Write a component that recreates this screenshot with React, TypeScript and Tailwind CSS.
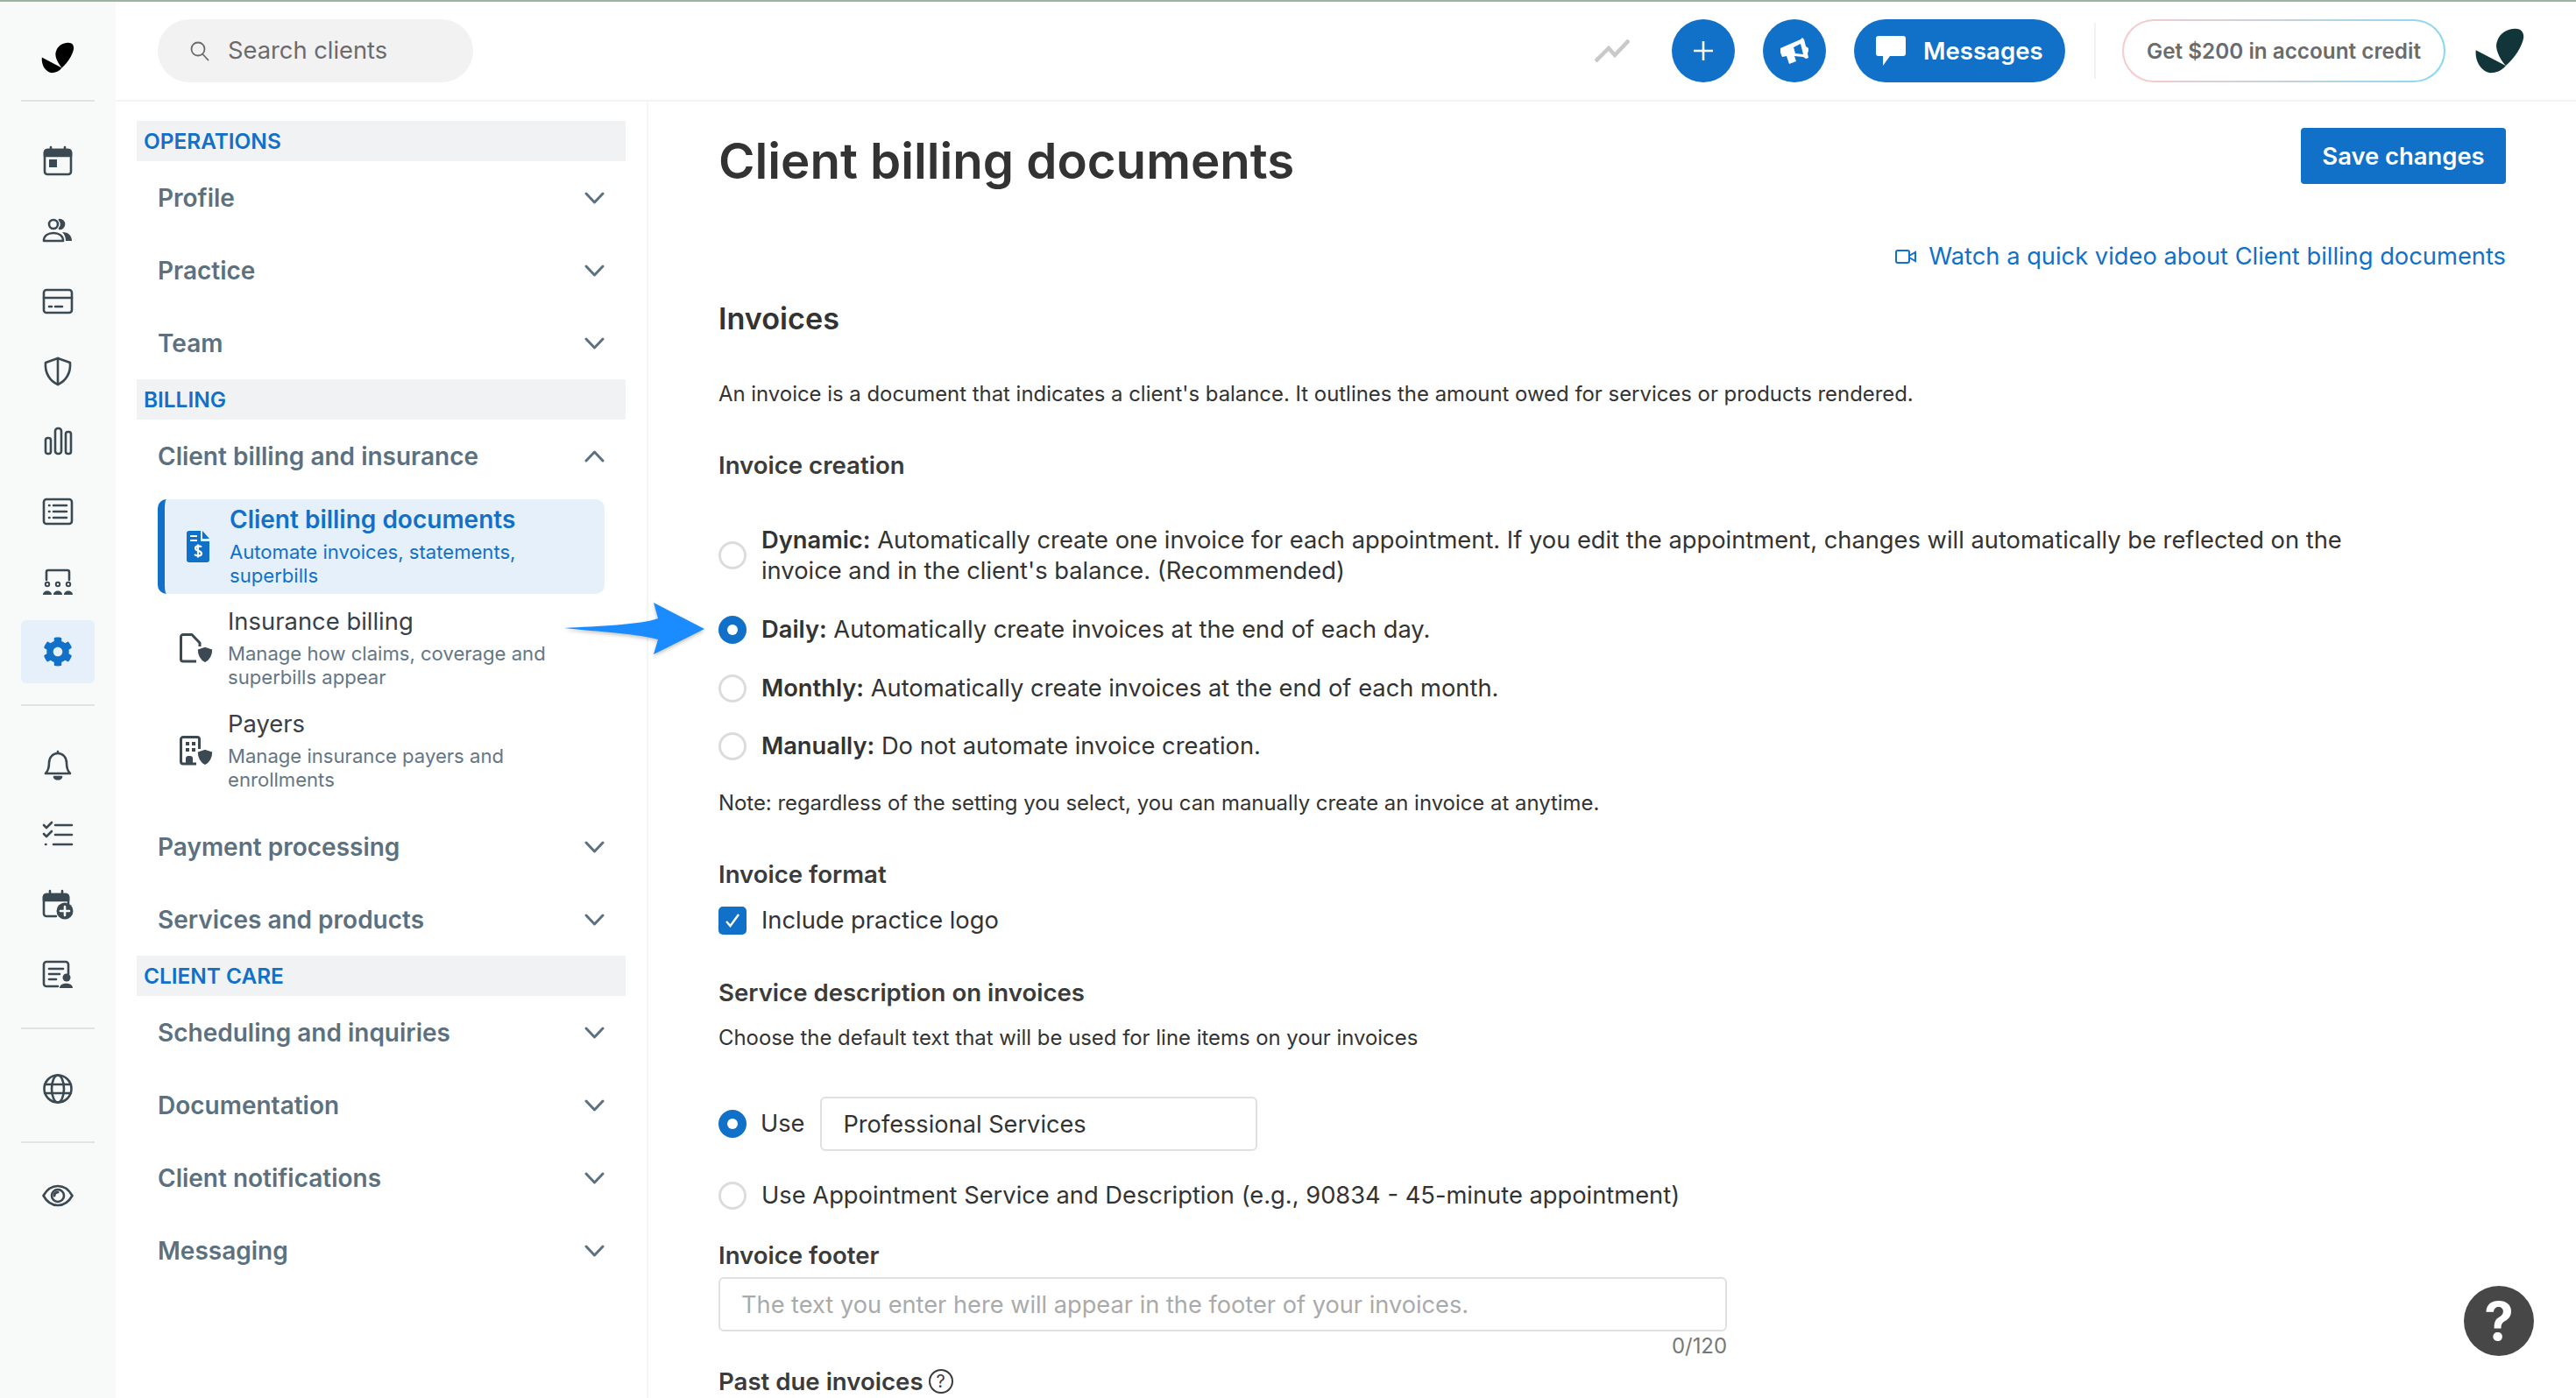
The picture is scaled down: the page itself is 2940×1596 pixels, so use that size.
import { FaCog } from "react-icons/fa";
import { ReactNode } from "react";

const Logo = ({ className }: { className: string }) => (
  <svg viewBox="14 15 44 41" preserveAspectRatio="none" className={className} fill="currentColor">
    <path d="M41 48C36 42 31 33 34 27C36 21 42 17 49 17C54 17 56 20 56 24C55 32 48 42 41 48Z" />
    <path d="M16 35L41 48C38 52 33 54 28 54C21 53 15 45 16 35Z" />
  </svg>
);

const RailSvg = ({ children }: { children: ReactNode }) => (
  <svg
    viewBox="0 0 36 36"
    className="w-[36px] h-[36px] text-[#3b4952]"
    fill="none"
    stroke="currentColor"
    strokeWidth="2.6"
    strokeLinecap="round"
    strokeLinejoin="round"
  >
    {children}
  </svg>
);

const CalendarIcon = () => (
  <RailSvg>
    <rect x="3" y="5" width="30" height="28" rx="3" />
    <path d="M3 8a3 3 0 0 1 3-3h24a3 3 0 0 1 3 3v4H3z" fill="currentColor" />
    <path d="M10 2v4M26 2v4" />
    <rect x="8" y="16" width="9" height="9" fill="currentColor" stroke="none" />
  </RailSvg>
);

const UsersIcon = () => (
  <RailSvg>
    <circle cx="13" cy="10" r="5" />
    <path d="M2 29c0-6 5-9 11-9s11 3 11 9z" />
    <path d="M20 5a5 5 0 0 1 0 10 7 7 0 0 0 0-10z" fill="currentColor" />
    <path d="M23 19c7 0 11 4 11 10h-7c0-4-1-7-4-10z" fill="currentColor" stroke="none" />
  </RailSvg>
);

const CardIcon = () => (
  <RailSvg>
    <rect x="2" y="5" width="32" height="26" rx="3" />
    <path d="M2 14h32" />
    <path d="M8 24h3M15 24h8" />
  </RailSvg>
);

const ShieldIcon = () => (
  <RailSvg>
    <path d="M18 3l14 5c1 12-5 21-14 25C9 29 3 20 4 8z" />
    <path d="M18 3v30" />
  </RailSvg>
);

const BarsIcon = () => (
  <RailSvg>
    <rect x="4" y="14" width="6" height="18" rx="2.5" />
    <rect x="15" y="3" width="7" height="29" rx="3" />
    <rect x="27" y="7" width="6" height="25" rx="2.5" />
  </RailSvg>
);

const ListCardIcon = () => (
  <RailSvg>
    <rect x="2" y="4" width="32" height="28" rx="3" />
    <path d="M8 11h.5M8 18h.5M8 25h.5M13 11h15M13 18h15M13 25h15" />
  </RailSvg>
);

const TeamIcon = () => (
  <RailSvg>
    <path d="M5 16V7a2 2 0 0 1 2-2h22a2 2 0 0 1 2 2v9" />
    <circle cx="6" cy="21" r="2.2" strokeWidth="2" />
    <circle cx="18" cy="21" r="2.2" strokeWidth="2" />
    <circle cx="30" cy="21" r="2.2" strokeWidth="2" />
    <path d="M1 33c0-6 10-6 10 0zM13 33c0-6 10-6 10 0zM25 33c0-6 10-6 10 0z" fill="currentColor" stroke="none" />
  </RailSvg>
);

const BellIcon = () => (
  <RailSvg>
    <path d="M18 3v2M4 28h28c-3-3-4-6-4-12 0-6-4-11-10-11S8 10 8 16c0 6-1 9-4 12z" />
    <path d="M14 32h8c-1 3-7 3-8 0z" fill="currentColor" />
  </RailSvg>
);

const ChecklistIcon = () => (
  <RailSvg>
    <path d="M2 7l3 3 6-6M2 17l3 3 6-6M4 29h.5M15 7h19M15 18h19M13 29h21" />
  </RailSvg>
);

const CalendarPlusIcon = () => (
  <RailSvg>
    <path d="M16 31H5a3 3 0 0 1-3-3V9a3 3 0 0 1 3-3h22a3 3 0 0 1 3 3v8" />
    <path d="M2 9a3 3 0 0 1 3-3h22a3 3 0 0 1 3 3v4H2z" fill="currentColor" />
    <path d="M9 2v4M23 2v4" />
    <circle cx="26" cy="25" r="9.5" fill="currentColor" stroke="none" />
    <path d="M26 20v10M21 25h10" stroke="#f8f9f9" />
  </RailSvg>
);

const DocPersonIcon = () => (
  <RailSvg>
    <path d="M18 31H5a3 3 0 0 1-3-3V6a3 3 0 0 1 3-3h22a3 3 0 0 1 3 3v11" />
    <path d="M8 11h16M8 17h12M8 23h8" />
    <circle cx="28" cy="21" r="4.5" fill="currentColor" stroke="none" />
    <path d="M20 33c0-7 15-7 15 0z" fill="currentColor" stroke="none" />
  </RailSvg>
);

const GlobeIcon = () => (
  <RailSvg>
    <circle cx="18" cy="18" r="15.5" />
    <ellipse cx="18" cy="18" rx="7" ry="15.5" />
    <path d="M3 13h30M3 23h30" />
  </RailSvg>
);

const EyeIcon = () => (
  <RailSvg>
    <path d="M1.5 18C6 10 12 7 18 7s12 3 16.500 11C30 26 24 29 18 29S6 26 1.500 18z" />
    <circle cx="18" cy="18" r="7" />
    <path d="M18 14a4 4 0 0 0-4 4" strokeWidth="3" />
  </RailSvg>
);

const RailItem = ({ children }: { children: ReactNode }) => (
  <div className="h-[80px] flex items-center justify-center shrink-0">{children}</div>
);

const RailDivider = ({ className }: { className: string }) => (
  <div className={`h-[2px] w-[84px] bg-[#e2e2e2] mx-auto shrink-0 ${className}`} />
);

const Rail = () => (
  <aside className="w-[132px] shrink-0 bg-[#f8f9f9] flex flex-col">
    <div className="h-[112px] flex justify-center pt-[45px] shrink-0 text-black">
      <Logo className="w-[40px] h-[38px]" />
    </div>
    <RailDivider className="" />
    <div className="h-[28px] shrink-0" />
    <RailItem><CalendarIcon /></RailItem>
    <RailItem><UsersIcon /></RailItem>
    <RailItem><CardIcon /></RailItem>
    <RailItem><ShieldIcon /></RailItem>
    <RailItem><BarsIcon /></RailItem>
    <RailItem><ListCardIcon /></RailItem>
    <RailItem><TeamIcon /></RailItem>
    <div className="mt-[4px] h-[72px] w-[84px] mx-auto rounded-[6px] bg-[#e5f0fa] flex items-center justify-center shrink-0 text-[#1170c8]">
      <FaCog className="w-[34px] h-[34px]" />
    </div>
    <RailDivider className="mt-[24px]" />
    <div className="h-[27px] shrink-0" />
    <RailItem><BellIcon /></RailItem>
    <RailItem><ChecklistIcon /></RailItem>
    <RailItem><CalendarPlusIcon /></RailItem>
    <RailItem><DocPersonIcon /></RailItem>
    <RailDivider className="mt-[20px]" />
    <div className="h-[28px] shrink-0" />
    <RailItem><GlobeIcon /></RailItem>
    <RailDivider className="mt-[20px]" />
    <div className="h-[20px] shrink-0" />
    <RailItem><EyeIcon /></RailItem>
  </aside>
);

const Header = () => (
  <header className="h-[114px] shrink-0 border-b-2 border-[#f2f3f3] flex items-center pl-[48px] pr-[57px]">
    <div className="w-[360px] h-[72px] rounded-full bg-[#f2f2f3] flex items-center pl-[36px] text-[#6b6b6b]">
      <svg viewBox="0 0 24 24" className="w-[24px] h-[24px]" fill="none" stroke="currentColor" strokeWidth="1.8" strokeLinecap="round">
        <circle cx="10" cy="10" r="7.500" />
        <path d="M15.500 16l6 6.500" />
      </svg>
      <span className="ml-[20px] text-[27.300px] leading-[36px]">Search clients</span>
    </div>
    <svg viewBox="0 0 40 26" className="ml-auto w-[40px] h-[26px]" fill="none" stroke="#c9c9c9" strokeWidth="4.500">
      <path d="M1 25L16 10l7 8L39 1" />
    </svg>
    <div className="ml-[48px] w-[72px] h-[72px] rounded-full bg-[#1170c8] flex items-center justify-center">
      <svg viewBox="0 0 22 22" className="w-[22px] h-[22px]" stroke="white" strokeWidth="2.600">
        <path d="M11 0v22M0 11h22" />
      </svg>
    </div>
    <div className="ml-[32px] w-[72px] h-[72px] rounded-full bg-[#1170c8] flex items-center justify-center">
      <svg viewBox="0 0 72 72" className="w-[72px] h-[72px]" fill="white" fillRule="evenodd">
        <path d="M20 33L43 23L45 21L47 23L49 31L52 33L52 36L51 39L52 44L49 45L46 43L36 42L38 48L30 51L27 42L22 43L20 38ZM35 32L43 28L46 40L37 39Z" />
      </svg>
    </div>
    <div className="ml-[32px] w-[241px] h-[72px] rounded-full bg-[#1170c8] flex items-center pl-[25px] text-white">
      <svg viewBox="0 0 34 34" className="w-[34px] h-[34px]" fill="white">
        <path d="M3 0H31a3 3 0 0 1 3 3V20a3 3 0 0 1-3 3H16L8 34V23H3a3 3 0 0 1-3-3V3a3 3 0 0 1 3-3z" />
      </svg>
      <span className="ml-[20px] text-[27.600px] leading-[36px] font-semibold">Messages</span>
    </div>
    <div className="ml-[33px] w-[2px] h-[64px] bg-[#f2f2f2]" />
    <div className="ml-[30px] w-[369px] h-[72px] rounded-full bg-gradient-to-r from-[#f9c9cb] to-[#84d8ef] p-[2px]">
      <div className="w-full h-full rounded-full bg-white flex items-center justify-center text-[24.300px] font-semibold text-[#6b6b6b]">
        Get $200 in account credit
      </div>
    </div>
    <Logo className="ml-[32px] w-[60px] h-[56px] text-[#12353a]" />
  </header>
);

const Chevron = ({ up }: { up?: boolean }) => (
  <svg viewBox="0 0 23 14" className="w-[23px] h-[14px]" fill="none" stroke="#5c7180" strokeWidth="3" strokeLinecap="round" strokeLinejoin="round">
    <path d={up ? "M2 12L11.500 2L21 12" : "M2 2L11.500 12L21 2"} />
  </svg>
);

const SectionLabel = ({ label }: { label: string }) => (
  <div className="h-[46px] bg-[#f1f2f4] pl-[8px] flex items-center text-[24.400px] font-semibold text-[#1170c8]">
    {label}
  </div>
);

const NavRow = ({ label, up }: { label: string; up?: boolean }) => (
  <div className="h-[83px] px-[24px] flex items-center justify-between text-[#5c7180] text-[28px] font-semibold">
    <span>{label}</span>
    <Chevron up={up} />
  </div>
);

const SubItem = ({
  icon,
  title,
  desc,
  active,
  className,
}: {
  icon: ReactNode;
  title: string;
  desc: ReactNode;
  active?: boolean;
  className?: string;
}) => (
  <div
    className={`mx-[24px] h-[108px] rounded-[10px] flex items-center ${
      active ? "bg-[#e5f0fa] border-l-[8px] border-[#1170c8] pl-[22px]" : "pl-[28px]"
    } ${className ?? ""}`}
  >
    <div className="w-[32px] flex justify-center shrink-0">{icon}</div>
    <div className="ml-[20px] pb-[3px]">
      <div
        className={`h-[38px] leading-[38px] ${
          active ? "text-[28px] font-semibold text-[#1170c8]" : "text-[27.400px] text-[#3a4046]"
        }`}
      >
        {title}
      </div>
      <div
        className={`mt-[5px] text-[22.100px] leading-[27px] whitespace-nowrap ${
          active ? "text-[#1170c8]" : "text-[#647684]"
        }`}
      >
        {desc}
      </div>
    </div>
  </div>
);

const DocDollarIcon = () => (
  <svg viewBox="0 0 26 36" className="w-[26px] h-[36px]">
    <path d="M3 0H16V12H26V33a3 3 0 0 1-3 3H3a3 3 0 0 1-3-3V3a3 3 0 0 1 3-3z" fill="#1170c8" />
    <path d="M18 0L26 9H18z" fill="#1170c8" />
    <path d="M4 6h8M4 11h8" stroke="white" strokeWidth="2" />
    <path d="M17 18.500c-1-1.500-7-2-7 1.500 0 3.500 7 2 7 6 0 3-6 3-8 1M13 15.500v15" stroke="white" strokeWidth="2.200" fill="none" />
  </svg>
);

const DocShieldIcon = () => (
  <svg viewBox="0 0 38 34" className="w-[38px] h-[34px] shrink-0" fill="none" stroke="#3b4952" strokeWidth="3" strokeLinejoin="round">
    <path d="M19 32H4a2.500 2.500 0 0 1-2.500-2.500V4A2.500 2.500 0 0 1 4 1.500H14L23 11V15" />
    <path d="M29 15l9 3c0 8-3 13-9 16-6-3-9-8-9-16z" fill="#3b4952" stroke="white" strokeWidth="1.500" />
  </svg>
);

const BuildingShieldIcon = () => (
  <svg viewBox="0 0 38 34" className="w-[38px] h-[34px] shrink-0" fill="none" stroke="#3b4952" strokeWidth="3" strokeLinejoin="round">
    <path d="M19 32H4a2.500 2.500 0 0 1-2.500-2.500V4A2.500 2.500 0 0 1 4 1.500H20a2.500 2.500 0 0 1 2.500 2.500V15" />
    <path d="M7 7h4v4H7zM14 7h4v4h-4zM7 14h4v4H7zM14 14h4v4h-4z" fill="#3b4952" stroke="none" />
    <path d="M7 32v-6a3 3 0 0 1 3-3h2a3 3 0 0 1 3 3v6z" fill="#3b4952" stroke="none" />
    <path d="M29 15l9 3c0 8-3 13-9 16-6-3-9-8-9-16z" fill="#3b4952" stroke="white" strokeWidth="1.500" />
  </svg>
);

const Sidebar = () => (
  <nav className="w-[608px] shrink-0 border-r-2 border-[#f5f5f5] flex flex-col pt-[22px]">
    <div className="w-[558px] ml-[24px]">
      <SectionLabel label="OPERATIONS" />
      <NavRow label="Profile" />
      <NavRow label="Practice" />
      <NavRow label="Team" />
      <SectionLabel label="BILLING" />
      <NavRow label="Client billing and insurance" up />
      <SubItem
        className="mt-[8px]"
        active
        icon={<DocDollarIcon />}
        title="Client billing documents"
        desc={<>Automate invoices, statements,<br />superbills</>}
      />
      <SubItem
        className="mt-[8px]"
        icon={<DocShieldIcon />}
        title="Insurance billing"
        desc={<>Manage how claims, coverage and<br />superbills appear</>}
      />
      <SubItem
        className="mt-[9px]"
        icon={<BuildingShieldIcon />}
        title="Payers"
        desc={<>Manage insurance payers and<br />enrollments</>}
      />
      <div className="h-[14px]" />
      <NavRow label="Payment processing" />
      <NavRow label="Services and products" />
      <SectionLabel label="CLIENT CARE" />
      <NavRow label="Scheduling and inquiries" />
      <NavRow label="Documentation" />
      <NavRow label="Client notifications" />
      <NavRow label="Messaging" />
    </div>
  </nav>
);

const Radio = ({ checked }: { checked?: boolean }) =>
  checked ? (
    <span className="w-[32px] h-[32px] rounded-full bg-[#1170c8] flex items-center justify-center shrink-0">
      <span className="w-[12px] h-[12px] rounded-full bg-white" />
    </span>
  ) : (
    <span className="w-[32px] h-[32px] rounded-full border-[3px] border-[#dcdcdc] bg-white shrink-0" />
  );

const Option = ({
  children,
  checked,
  className,
}: {
  children: ReactNode;
  checked?: boolean;
  className: string;
}) => (
  <div className={`flex items-center gap-[17px] text-[27.300px] leading-[36px] text-[#333] ${className}`}>
    <Radio checked={checked} />
    <div className="whitespace-nowrap">{children}</div>
  </div>
);

const FieldTitle = ({ children, className }: { children: ReactNode; className: string }) => (
  <div className={`h-[36px] leading-[36px] text-[27.600px] font-semibold text-[#3b3b3b] ${className}`}>
    {children}
  </div>
);

const Main = () => (
  <main className="flex-1 min-w-0 pl-[80px] pr-[80px] pt-[30px] text-[#333]">
    <div className="flex justify-between items-start">
      <h1 className="text-[56.400px] leading-[76px] font-semibold text-[#333]">Client billing documents</h1>
      <button className="w-[234px] h-[64px] pt-[2px] rounded-[4px] bg-[#1170c8] text-white text-[27.400px] font-semibold">
        Save changes
      </button>
    </div>
    <div className="mt-[53px] h-[36px] flex justify-end items-center gap-[14px] text-[#1170c8] text-[27.300px]">
      <svg viewBox="0 0 24 18" className="w-[24px] h-[18px]" fill="none" stroke="currentColor" strokeWidth="2">
        <rect x="1" y="2" width="15" height="14" rx="2" />
        <path d="M16 8l7-4v10l-7-4" />
      </svg>
      <span>Watch a quick video about Client billing documents</span>
    </div>
    <h2 className="mt-[31px] h-[44px] leading-[44px] text-[34.200px] font-semibold text-[#333]">Invoices</h2>
    <p className="mt-[48px] h-[32px] leading-[32px] text-[23.900px]">
      An invoice is a document that indicates a client's balance. It outlines the amount owed for services or products rendered.
    </p>
    <FieldTitle className="mt-[47px]">Invoice creation</FieldTitle>
    <Option className="mt-[50px]">
      <div className="leading-[35px]">
        <b className="font-semibold">Dynamic:</b> Automatically create one invoice for each appointment. If you edit the appointment, changes will automatically be reflected on the
        <br />
        invoice and in the client's balance. (Recommended)
      </div>
    </Option>
    <Option className="mt-[32px]" checked>
      <b className="font-semibold">Daily:</b> Automatically create invoices at the end of each day.
    </Option>
    <Option className="mt-[31px]">
      <b className="font-semibold">Monthly:</b> Automatically create invoices at the end of each month.
    </Option>
    <Option className="mt-[30px]">
      <b className="font-semibold">Manually:</b> Do not automate invoice creation.
    </Option>
    <p className="mt-[31px] h-[32px] leading-[32px] text-[23.900px]">
      Note: regardless of the setting you select, you can manually create an invoice at anytime.
    </p>
    <FieldTitle className="mt-[47px]">Invoice format</FieldTitle>
    <div className="mt-[17px] flex items-center gap-[17px] text-[27.300px] leading-[36px]">
      <span className="w-[32px] h-[32px] rounded-[5px] bg-[#1170c8] flex items-center justify-center">
        <svg viewBox="0 0 20 20" className="w-[20px] h-[20px]" fill="none" stroke="white" strokeWidth="2.400">
          <path d="M3 11l4.500 5L17 3" />
        </svg>
      </span>
      Include practice logo
    </div>
    <FieldTitle className="mt-[46px]">Service description on invoices</FieldTitle>
    <p className="mt-[18px] h-[32px] leading-[32px] text-[23.900px]">
      Choose the default text that will be used for line items on your invoices
    </p>
    <div className="mt-[51px] flex items-center text-[27.200px]">
      <Radio checked />
      <span className="ml-[16px]">Use</span>
      <input
        readOnly
        value="Professional Services"
        className="ml-[18px] w-[499px] h-[62px] border-2 border-[#e0e0e0] rounded-[6px] px-[24px] text-[#333] bg-white"
      />
    </div>
    <Option className="mt-[33px]">Use Appointment Service and Description (e.g., 90834 - 45-minute appointment)</Option>
    <FieldTitle className="mt-[32px]">Invoice footer</FieldTitle>
    <input
      readOnly
      placeholder="The text you enter here will appear in the footer of your invoices."
      className="mt-[7px] block w-[1151px] h-[62px] border-2 border-[#e0e0e0] rounded-[6px] px-[24px] text-[27.200px] placeholder:text-[#aaaaaa] bg-white"
    />
    <div className="mt-[3px] w-[1151px] h-[28px] leading-[28px] text-right text-[23.900px] text-[#777]">0/120</div>
    <FieldTitle className="mt-[8px] flex items-center gap-[6px]">
      Past due invoices
      <span className="w-[28px] h-[28px] rounded-full border-2 border-[#3b3b3b] flex items-center justify-center text-[20px] leading-none font-normal">?</span>
    </FieldTitle>
  </main>
);

const Arrow = () => (
  <svg viewBox="0 0 165 62" className="absolute left-[642px] top-[687px] w-[165px] h-[62px] drop-shadow-[0_2px_2px_rgba(0,0,0,0.25)]">
    <path d="M2 30C40 28 90 26 109 19L104 1L162 31L104 60L109 43C90 37 40 34 2 30Z" fill="#1a8cff" />
  </svg>
);

export default function App() {
  return (
    <div className="relative w-[2940px] h-[1596px] overflow-hidden bg-white flex flex-col [font-family:Inter,sans-serif]">
      <div className="h-[2px] bg-[#9db39d] shrink-0" />
      <div className="flex flex-1 min-h-0">
        <Rail />
        <div className="flex-1 min-w-0 flex flex-col">
          <Header />
          <div className="flex flex-1 min-h-0">
            <Sidebar />
            <Main />
          </div>
        </div>
      </div>
      <Arrow />
      <button className="absolute left-[2812px] top-[1468px] w-[80px] h-[80px] rounded-full bg-[#474747] text-white text-[60px] leading-none font-bold">
        ?
      </button>
    </div>
  );
}
